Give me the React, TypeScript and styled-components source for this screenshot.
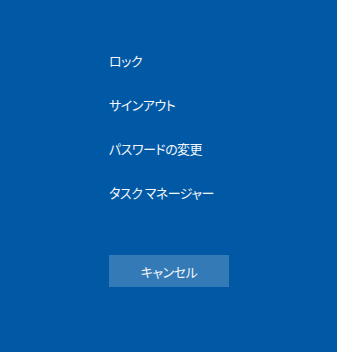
import React from "react";
import styled, { createGlobalStyle } from "styled-components";

const Global = createGlobalStyle`
  html, body { margin: 0; padding: 0; background: #0159a5; }
  body { font-family: "Noto Sans CJK JP", "Noto Sans", sans-serif; }
`;

const Screen = styled.div`
  width: 337px;
  height: 352px;
  background: #0159a5;
  box-sizing: border-box;
  padding: 38px 0 0 109px;
  display: flex;
  flex-direction: column;
  align-items: flex-start;
`;

const Menu = styled.ul`
  list-style: none;
  margin: 0;
  padding: 0;
  display: flex;
  flex-direction: column;
`;

const Item = styled.li`
  height: 44px;
  display: flex;
  align-items: center;
  color: #f4f7fb;
  font-size: 13px;
  font-feature-settings: "palt";
  letter-spacing: -0.5px;
  white-space: pre;
`;

const CancelButton = styled.button`
  margin-top: 41px;
  width: 120px;
  height: 32px;
  border: none;
  padding: 0;
  background: rgba(255, 255, 255, 0.2);
  color: #f4f7fb;
  font-family: inherit;
  font-size: 13px;
  font-feature-settings: "palt";
  letter-spacing: -0.5px;
  display: flex;
  align-items: center;
  justify-content: center;
`;

export default function App() {
  const items = ["ロック", "サインアウト", "パスワードの変更", "タスク マネージャー"];
  return (
    <>
      <Global />
      <Screen>
        <Menu>
          {items.map((t) => (
            <Item key={t}>{t}</Item>
          ))}
        </Menu>
        <CancelButton>キャンセル</CancelButton>
      </Screen>
    </>
  );
}
